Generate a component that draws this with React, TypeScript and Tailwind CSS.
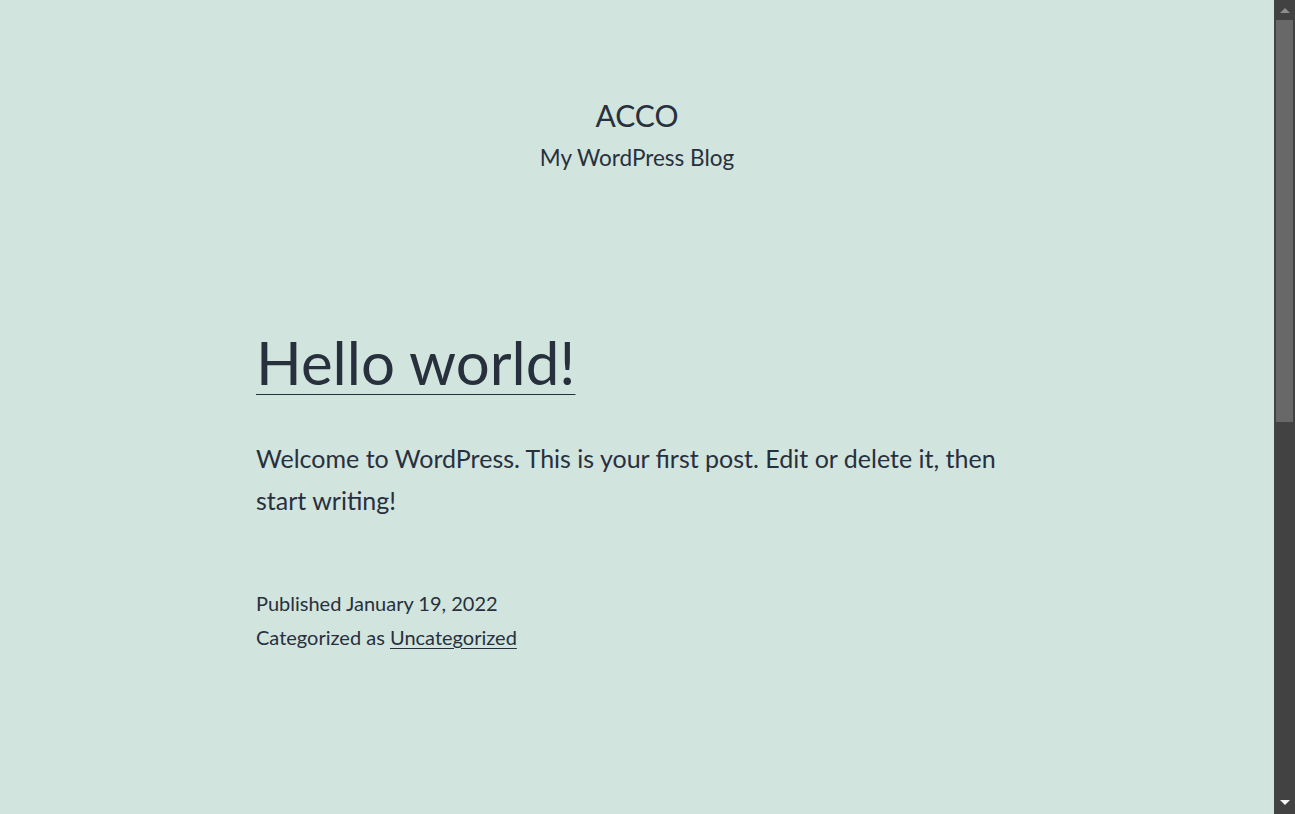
function ScrollRail() {
  // static picture of the browser's dark scrollbar, page scrolled to top
  return (
    <div className="w-[21px] shrink-0 h-full bg-[#424242] flex flex-col">
      <div className="h-[17px] flex justify-center pt-[8px]">
        <svg width="10" height="5" viewBox="0 0 10 5">
          <polygon points="0,5 5,0 10,5" fill="#8c8c8c" />
        </svg>
      </div>
      <div className="mt-[3px] mx-[2px] h-[402px] bg-[#686868]" />
      <div className="flex-1" />
      <div className="h-[17px] flex justify-center pt-[3px]">
        <svg width="10" height="5" viewBox="0 0 10 5">
          <polygon points="0,0 10,0 5,5" fill="#f5f5f5" />
        </svg>
      </div>
    </div>
  );
}

export default function App() {
  return (
    <div className="h-screen flex bg-[#d1e4dd] text-[#28303d] font-[family-name:Lato,sans-serif]">
      <div className="flex-1 min-w-0 overflow-y-auto">
        <div className="pb-[924px]">
          {/* Site header */}
          <header className="pt-[96px] text-center">
            <h1 className="text-[30px] leading-[39px] font-normal uppercase">ACCO</h1>
            <p className="mt-[7px] text-[22.5px] leading-[31.5px]">My WordPress Blog</p>
          </header>

          <main className="w-[762px] mx-auto">
            <article>
              <h2 className="mt-[149px] text-[60px] leading-[78px] font-normal">
                <a href="#" className="underline decoration-1 underline-offset-[9px]">
                  Hello world!
                </a>
              </h2>

              <div className="mt-[36px] text-[25px] leading-[42.5px]">
                <p>
                  Welcome to WordPress. This is your first post. Edit or delete it, then start
                  writing!
                </p>
              </div>

              <footer className="mt-[64px] text-[20px] leading-[34px]">
                <div>Published January 19, 2022</div>
                <div>
                  Categorized as{' '}
                  <a href="#" className="underline decoration-1 underline-offset-[3px]">
                    Uncategorized
                  </a>
                </div>
              </footer>
            </article>
          </main>
        </div>
      </div>
      <ScrollRail />
    </div>
  );
}
